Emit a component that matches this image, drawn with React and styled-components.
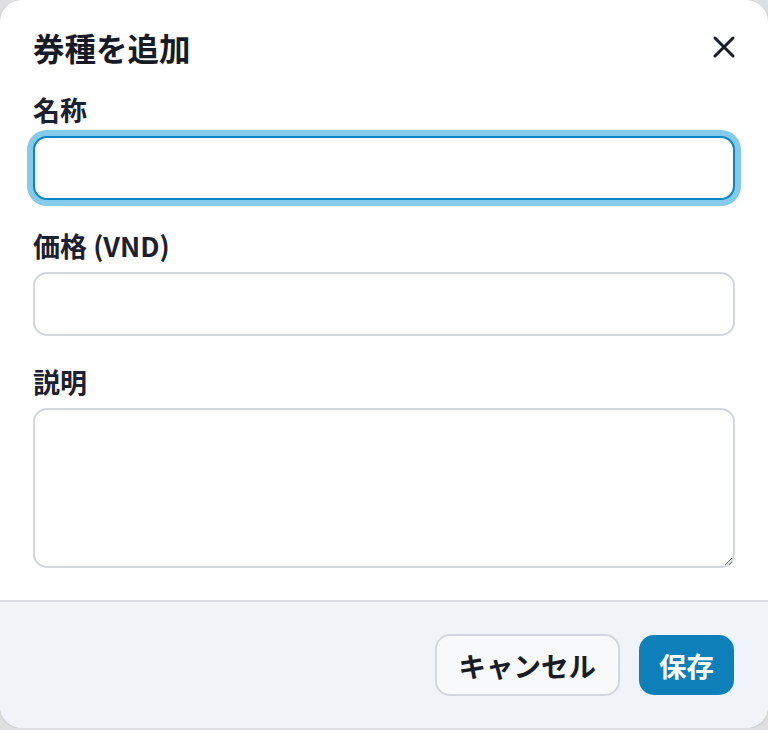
import React, { useEffect, useRef } from 'react';
import styled, { createGlobalStyle } from 'styled-components';

const GlobalStyle = createGlobalStyle`
  html, body {
    margin: 0;
    padding: 0;
    background: #dedfe1;
  }
  body {
    font-family: "Noto Sans CJK JP", "Noto Sans", sans-serif;
  }
`;

const Modal = styled.div`
  width: 768px;
  height: 728px;
  box-sizing: border-box;
  background: #ffffff;
  border-radius: 22px;
  box-shadow: 0 1px 3px rgba(0, 0, 0, 0.12);
  display: flex;
  flex-direction: column;
  overflow: hidden;
`;

const Body = styled.div`
  flex: 1;
  padding: 23px 33px 0 33px;
  display: flex;
  flex-direction: column;
`;

const Header = styled.div`
  display: flex;
  align-items: center;
  justify-content: space-between;
  height: 48px;
  margin-bottom: 19px;
`;

const Title = styled.h2`
  margin: 0;
  font-size: 31.5px;
  line-height: 48px;
  font-weight: 700;
  color: #161b26;
`;

const CloseButton = styled.button`
  border: none;
  background: transparent;
  padding: 0;
  width: 24px;
  height: 24px;
  margin-right: -1px;
  display: flex;
  align-items: center;
  justify-content: center;
  cursor: pointer;
  color: #161b26;
`;

const Field = styled.div`
  display: flex;
  flex-direction: column;
  margin-bottom: 26px;
`;

const Label = styled.label`
  font-size: 27px;
  line-height: 40px;
  font-weight: 700;
  color: #1b2130;
  margin-bottom: 6px;
`;

const Input = styled.input`
  box-sizing: border-box;
  height: 64px;
  width: 100%;
  border: 2px solid #d3d6de;
  border-radius: 14px;
  padding: 0 20px;
  font-size: 26px;
  font-family: inherit;
  outline: none;
  background: #fff;

  &:focus {
    border-color: #0b85c4;
    box-shadow: 0 0 0 6px #84cbea;
  }
`;

const TextArea = styled.textarea`
  box-sizing: border-box;
  height: 160px;
  width: 100%;
  border: 2px solid #d3d6de;
  border-radius: 14px;
  padding: 14px 20px;
  font-size: 26px;
  font-family: inherit;
  outline: none;
  resize: vertical;
  background: #fff;
`;

const Footer = styled.div`
  border-top: 2px solid #d9dce2;
  background: #f0f3f7;
  height: 128px;
  box-sizing: border-box;
  padding: 0 34px;
  display: flex;
  align-items: center;
  justify-content: flex-end;
  gap: 19px;
`;

const Button = styled.button`
  box-sizing: border-box;
  height: ${(p) => (p.$primary ? '60px' : '62px')};
  padding: 0 ${(p) => (p.$primary ? '20px' : '22px')};
  border-radius: 15px;
  font-family: inherit;
  font-size: 27.5px;
  font-weight: 700;
  cursor: pointer;
  border: ${(p) => (p.$primary ? 'none' : '2px solid #d3d6de')};
  background: ${(p) => (p.$primary ? '#0e80b9' : '#f8f9fb')};
  color: ${(p) => (p.$primary ? '#ffffff' : '#171c27')};
`;

function CloseIcon() {
  return (
    <svg width="22" height="22" viewBox="0 0 22 22" fill="none">
      <path d="M2 2L20 20M20 2L2 20" stroke="currentColor" strokeWidth="3" strokeLinecap="round" />
    </svg>
  );
}

export default function App() {
  const nameRef = useRef(null);

  useEffect(() => {
    nameRef.current && nameRef.current.focus();
  }, []);

  return (
    <>
      <GlobalStyle />
      <Modal>
        <Body>
          <Header>
            <Title>券種を追加</Title>
            <CloseButton aria-label="閉じる">
              <CloseIcon />
            </CloseButton>
          </Header>
          <Field>
            <Label>名称</Label>
            <Input ref={nameRef} />
          </Field>
          <Field>
            <Label>価格 (VND)</Label>
            <Input type="text" />
          </Field>
          <Field>
            <Label>説明</Label>
            <TextArea />
          </Field>
        </Body>
        <Footer>
          <Button>キャンセル</Button>
          <Button $primary>保存</Button>
        </Footer>
      </Modal>
    </>
  );
}
